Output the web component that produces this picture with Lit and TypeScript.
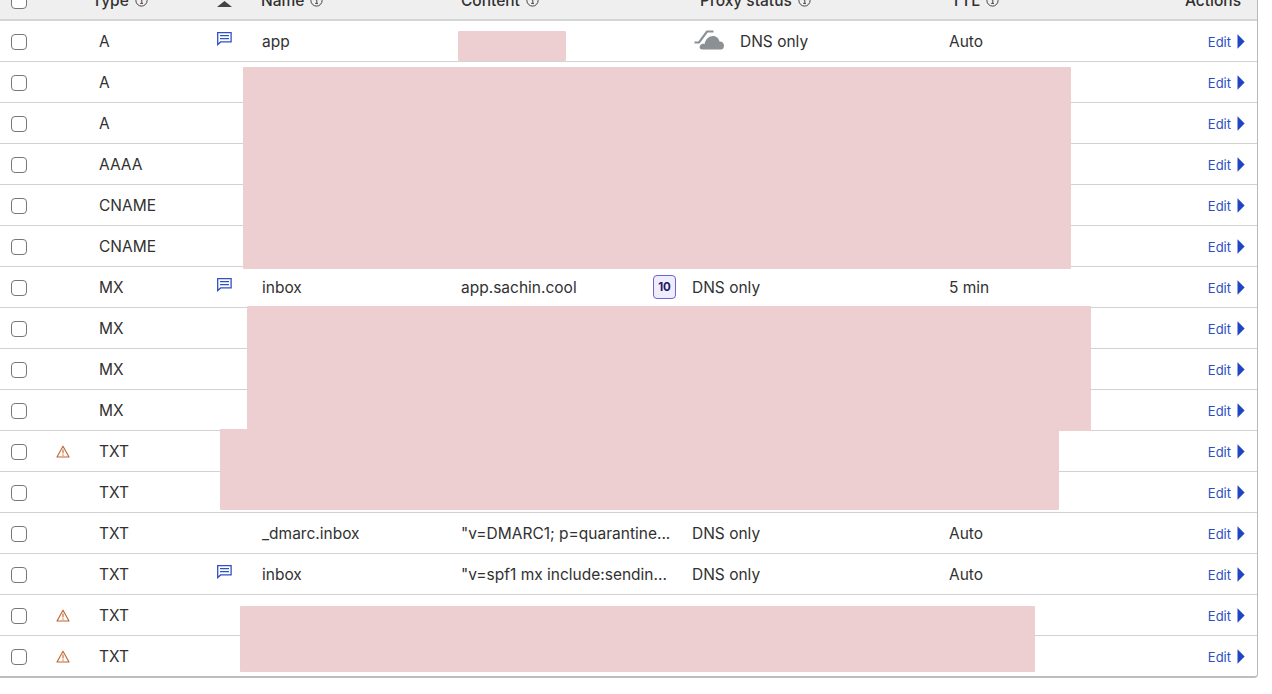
import { LitElement, html, css, svg } from "lit";
import { customElement } from "lit/decorators.js";

type Row = { type: string; warn?: boolean; note?: boolean; name?: string; content?: string; badge?: string; proxy?: string; cloud?: boolean; ttl?: string };

const rows: Row[] = [
  { type: "A", note: true, name: "app", proxy: "DNS only", cloud: true, ttl: "Auto" },
  { type: "A" }, { type: "A" }, { type: "AAAA" }, { type: "CNAME" }, { type: "CNAME" },
  { type: "MX", note: true, name: "inbox", content: "app.sachin.cool", badge: "10", proxy: "DNS only", ttl: "5 min" },
  { type: "MX" }, { type: "MX" }, { type: "MX" },
  { type: "TXT", warn: true }, { type: "TXT" },
  { type: "TXT", name: "_dmarc.inbox", content: "\"v=DMARC1; p=quarantine...", proxy: "DNS only", ttl: "Auto" },
  { type: "TXT", note: true, name: "inbox", content: "\"v=spf1 mx include:sendin...", proxy: "DNS only", ttl: "Auto" },
  { type: "TXT", warn: true }, { type: "TXT", warn: true },
];

const redactions = [
  { x: 458, y: 31, w: 108, h: 30 },
  { x: 243, y: 67, w: 828, h: 202 },
  { x: 247, y: 306, w: 844, h: 125 },
  { x: 220, y: 429, w: 839, h: 81 },
  { x: 240, y: 606, w: 795, h: 66 },
];

const info = svg`<svg class="info" viewBox="0 0 13 13" width="13" height="13"><circle cx="6.5" cy="6.5" r="5.6" fill="none" stroke="#444" stroke-width="1"/><path d="M5.4 5.6h1.4v3.4M5.2 9.4h2.8M6.5 3.2v1.2" fill="none" stroke="#444" stroke-width="1"/></svg>`;
const note = svg`<svg class="note" viewBox="0 0 15 14" width="15" height="14"><path d="M.7.7h13.4v9.2H3.6L.7 12.6z" fill="none" stroke="#2f51c4" stroke-width="1.3"/><path d="M3 3.7h9M3 6.7h9" stroke="#2f51c4" stroke-width="1.2"/></svg>`;
const warn = svg`<svg class="warn" viewBox="0 0 14 13" width="14" height="13"><path d="M7 1.2 13 12H1z" fill="none" stroke="#c2602c" stroke-width="1.1" stroke-linejoin="round"/><path d="M7 4.6v4M7 9.6v1.2" stroke="#c2602c" stroke-width="1.1"/></svg>`;
const cloud = svg`<svg class="cloud" viewBox="0 0 31 21" width="31" height="21"><path d="M.5 13.5H5L13 2.500h6.500" fill="none" stroke="#8b9094" stroke-width="2.200"/><path d="M8 20.500c-2.500 0-3-3-1.500-4.500 1-1 3-1.500 4-.8C11.500 10 15 7 19 7c3.500 0 6 2.500 6.500 5.500 2.500-.3 4.500 1.500 4.500 4 0 2-1 4-3 4z" fill="#8b9094"/></svg>`;
const arrow = svg`<svg class="arrow" viewBox="0 0 8 15" width="8" height="15"><path d="M.5.300 7.600 7.500.5 14.700z" fill="#1f44c4"/></svg>`;
const sort = svg`<svg viewBox="0 0 15 6" width="15" height="6"><path d="M7.500 0 15 6H0z" fill="#444"/></svg>`;

@customElement("app-root")
export class AppRoot extends LitElement {
  static styles = css`
    :host {
      display: block;
      position: relative;
      width: 1272px;
      height: 694px;
      overflow: hidden;
      background: #fff;
      font-family: Inter, "Liberation Sans", sans-serif;
      font-size: 15.500px;
      color: #313131;
    }
    .table {
      width: 1258px;
      margin-top: -20px;
      box-sizing: border-box;
      border-right: 1px solid #b8b8b8;
      border-bottom: 2px solid #bdbdbd;
      border-bottom-right-radius: 4px;
    }
    .head {
      display: grid;
      grid-template-columns: 92px 125px 44px 200px 239px 251px 150px 1fr;
      align-items: center;
      height: 41px;
      box-sizing: border-box;
      background: #efefef;
      border-bottom: 2px solid #d4d4d4;
      font-weight: 500;
      font-size: 15.500px;
      padding-top: 2px;
    }
    .head .hc { display: flex; align-items: center; gap: 6px; white-space: nowrap; }
    .head .first { padding-left: 11px; }
    .head .sort { display: flex; margin-top: 6px; }
    .head .actions { justify-content: flex-end; padding-right: 16px; }
    .row {
      display: grid;
      grid-template-columns: 50px 49px 117px 46px 199px 231px 257px 150px 1fr;
      align-items: center;
      height: 41px;
      box-sizing: border-box;
      border-bottom: 1px solid #d2d2d2;
    }
    .row:last-child { border-bottom: none; height: 40px; }
    .check {
      appearance: none;
      display: block;
      margin: 1px 0 0 11px;
      width: 16px;
      height: 16px;
      box-sizing: border-box;
      border: 1.3px solid #777;
      border-radius: 4px;
      background: #fff;
    }
    .head .check { margin: 0; }
    .warncell { padding-left: 6px; display: flex; }
    .notecell { display: flex; margin-top: -5px; padding-left: 1px; }
    .cell { white-space: nowrap; }
    .content { display: flex; align-items: center; justify-content: space-between; padding-right: 16px; }
    .badge {
      width: 23px;
      height: 24px;
      box-sizing: border-box;
      display: flex;
      align-items: center;
      justify-content: center;
      border: 1px solid #6c63d4;
      border-radius: 4px;
      background: #efedfb;
      color: #1f1a66;
      font-size: 11.500px;
      font-weight: 700;
    }
    .proxy { display: flex; align-items: center; }
    .cloudwrap { display: flex; margin: -3px 0 0 -46px; width: 46px; }
    .proxy.with-cloud { padding-left: 48px; }
    .edit {
      display: flex;
      align-items: center;
      justify-content: flex-end;
      gap: 6px;
      padding-right: 12px;
      color: #2c4fc0;
      font-size: 13px;
      margin-top: 1px;
    }
    .redact {
      position: absolute;
      background: #edcfd1;
      border-radius: 1px;
    }
  `;

  private renderRow(r: Row) {
    return html`<div class="row">
      <div><input class="check" type="checkbox" /></div>
      <div class="warncell">${r.warn ? warn : ""}</div>
      <div class="cell">${r.type}</div>
      <div class="notecell">${r.note ? note : ""}</div>
      <div class="cell">${r.name ?? ""}</div>
      <div class="cell content"><span>${r.content ?? ""}</span>${r.badge ? html`<span class="badge">${r.badge}</span>` : ""}</div>
      <div class="cell proxy ${r.cloud ? "with-cloud" : ""}">
        ${r.cloud ? html`<span class="cloudwrap">${cloud}</span>` : ""}${r.proxy ?? ""}
      </div>
      <div class="cell">${r.ttl ?? ""}</div>
      <div class="edit">Edit ${arrow}</div>
    </div>`;
  }

  render() {
    return html`
      <div class="table">
        <div class="head">
          <div class="first"><input class="check" type="checkbox" /></div>
          <div class="hc">Type ${info}</div>
          <div class="sort">${sort}</div>
          <div class="hc">Name ${info}</div>
          <div class="hc">Content ${info}</div>
          <div class="hc">Proxy status ${info}</div>
          <div class="hc">TTL ${info}</div>
          <div class="hc actions">Actions</div>
        </div>
        ${rows.map((r) => this.renderRow(r))}
      </div>
      ${redactions.map(
        (b) => html`<div class="redact" style="left:${b.x}px;top:${b.y}px;width:${b.w}px;height:${b.h}px"></div>`
      )}
    `;
  }
}
